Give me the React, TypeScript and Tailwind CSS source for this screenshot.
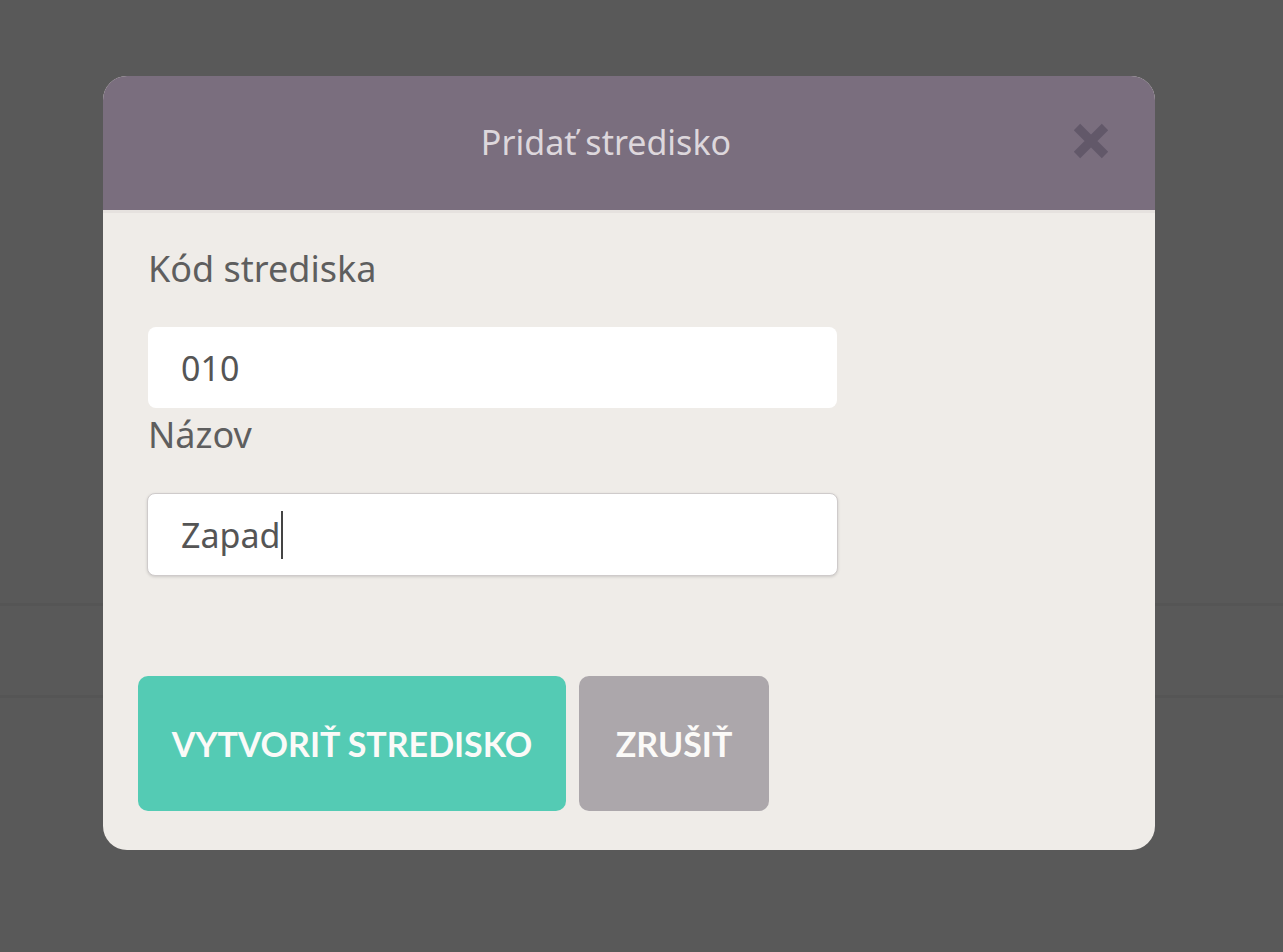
import React from "react";

const bodyFont = { fontFamily: "'Noto Sans', Lato, sans-serif" };
const buttonFont = { fontFamily: "Lato, 'Noto Sans', sans-serif" };

function CloseIcon() {
  return (
    <svg width="40" height="40" viewBox="0 0 40 40" aria-hidden="true">
      <path d="M6 6 L34 34 M34 6 L6 34" stroke="#625869" strokeWidth="9" strokeLinecap="butt" />
    </svg>
  );
}

function Field({ label, value, focused }: { label: string; value: string; focused?: boolean }) {
  return (
    <div className="flex flex-col">
      <label className="text-[36px] leading-[40px] text-[#5e5e5e] mt-[-2px] mb-[2px]">{label}</label>
      <div
        className={
          focused
            ? "mt-[36px] w-[691px] h-[83px] ml-[-1px] bg-white rounded-[8px] border border-[#cfcbcb] shadow-[0_1px_3px_rgba(0,0,0,0.15)] flex items-center pl-[33px]"
            : "mt-[36px] w-[689px] h-[81px] bg-white rounded-[8px] flex items-center pl-[33px]"
        }
      >
        <span className="text-[34px] text-[#555] leading-none">{value}</span>
        {focused && <span className="w-[2px] h-[48px] bg-[#444] ml-[1px]" />}
      </div>
    </div>
  );
}

export default function App() {
  return (
    <div className="min-h-[952px] w-full bg-[#595959] relative" style={bodyFont}>
      <div className="absolute left-0 right-0 top-[603px] h-[95px] border-y-[3px] border-[#555555]" />
      <div className="relative pt-[76px] pl-[103px]">
        <div className="w-[1052px] h-[774px] rounded-[24px] overflow-hidden bg-[#efece8] flex flex-col">
          <div className="h-[134px] bg-[#7a6e7e] flex items-center justify-center relative border-b-[3px] border-[#e6e2df] box-content">
            <h2 className="text-[34px] text-[#ddd7dc] font-normal mt-[-2px] mr-[46px]">Pridať stredisko</h2>
            <button className="absolute right-[44px] top-[45px]">
              <CloseIcon />
            </button>
          </div>
          <div className="pl-[45px] pt-[38px] flex flex-col">
            <Field label="Kód strediska" value="010" />
            <div className="mt-[9px]">
              <Field label="Názov" value="Zapad" focused />
            </div>
            <div className="flex gap-[13px] mt-[100px] ml-[-10px]" style={buttonFont}>
              <button className="w-[428px] h-[135px] rounded-[10px] bg-[#54cbb4] text-[#fbfaf8] font-bold text-[34px] uppercase">
                Vytvoriť stredisko
              </button>
              <button className="w-[190px] h-[135px] rounded-[10px] bg-[#aca7ab] text-[#fbfaf8] font-bold text-[34px] uppercase">
                Zrušiť
              </button>
            </div>
          </div>
        </div>
      </div>
    </div>
  );
}
